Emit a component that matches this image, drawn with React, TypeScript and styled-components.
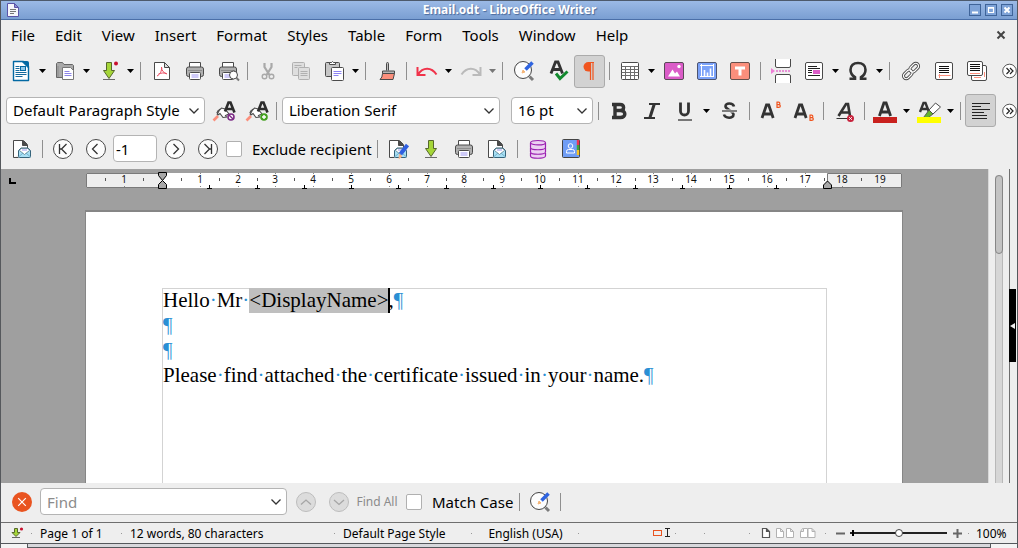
import React from "react";
import styled, { createGlobalStyle, css } from "styled-components";

const UI = `"Noto Sans", "Open Sans", sans-serif`;

const GlobalStyle = createGlobalStyle`
  *, *::before, *::after { box-sizing: border-box; }
  body { margin: 0; background: #eeeeee; font-family: ${UI}; color: #000; }
  button, input, select { font: inherit; color: inherit; margin: 0; }
`;

const Window = styled.div`
  display: flex;
  flex-direction: column;
  height: 100vh;
  overflow: hidden;
  background: #eeeeee;
  border: solid #55585c;
  border-width: 0 1px;
`;

/* ---------- title bar ---------- */

const TitleBar = styled.header`
  display: grid;
  grid-template-columns: 64px 1fr 64px;
  align-items: center;
  flex: none;
  height: 20px;
  padding: 0 4px 0 5px;
  border-top: 1px solid #4d5a6c;
  border-bottom: 1px solid #4a6fa8;
  background: linear-gradient(#9bbae6, #7a9fd2);
`;

const TitleText = styled.h1`
  margin: 0;
  text-align: center;
  font-size: 12px;
  line-height: 18px;
  font-weight: 700;
  color: #fff;
  text-shadow: 1px 1px 1px #4a6a9c;
`;

const WindowControls = styled.div`
  display: flex;
  justify-content: flex-end;
  gap: 4px;
`;

const WindowButton = styled.button`
  display: flex;
  width: 12px;
  height: 12px;
  padding: 0;
  border: 1px solid #3f6499;
  background: #7ea3d8;
`;

/* ---------- menus ---------- */

const MenuBar = styled.nav`
  display: flex;
  align-items: center;
  flex: none;
  height: 31px;
  padding-bottom: 2px;
`;

const MenuItem = styled.button`
  padding: 0 10px;
  border: 0;
  background: none;
  font-size: 15px;
  line-height: 24px;
`;

const CloseDocument = styled.button`
  display: flex;
  margin-left: auto;
  padding: 5px 11px;
  border: 0;
  background: none;
`;

/* ---------- toolbars ---------- */

const Toolbar = styled.div<{ $tall?: boolean; $last?: boolean }>`
  display: flex;
  align-items: center;
  flex: none;
  height: ${(p) => (p.$tall ? 40 : 39)}px;
  padding: ${(p) => (p.$last ? "0 0 2px 4px" : "0 0 0 3px")};
`;

const IconButton = styled.button<{ $active?: boolean }>`
  display: flex;
  align-items: center;
  justify-content: center;
  flex: none;
  width: 31px;
  height: 33px;
  margin: 0 1px;
  padding: 0;
  border: 1px solid transparent;
  border-radius: 3px;
  background: none;
  ${(p) =>
    p.$active &&
    css`
      border-color: #ababab;
      background: #d2d2d2;
    `}
`;

const ArrowButton = styled.button`
  display: flex;
  align-items: center;
  justify-content: center;
  flex: none;
  width: 11px;
  height: 33px;
  padding: 0;
  border: 0;
  background: none;
`;

const Separator = styled.span<{ $size?: number }>`
  display: flex;
  justify-content: center;
  flex: none;
  width: ${(p) => p.$size ?? 8}px;
  &::before {
    content: "";
    width: 1px;
    height: 18px;
    background: #8f8f8f;
  }
`;

const OverflowButton = styled.button`
  display: flex;
  flex: none;
  margin-left: auto;
  padding: 0;
  border: 0;
  background: none;
`;

const ComboBox = styled.span<{ $width: number }>`
  position: relative;
  flex: none;
  width: ${(p) => p.$width}px;
  margin: 0 2px;
  & + & {
    margin-left: 9px;
  }
  svg {
    position: absolute;
    top: 50%;
    right: 5px;
    margin-top: -6px;
    pointer-events: none;
  }
`;

const field = css`
  height: 27px;
  border: 1px solid #b4b4b4;
  border-radius: 4px;
  background: #fff;
  outline: 0;
  font-size: 15px;
`;

const Select = styled.select`
  ${field}
  display: block;
  width: 100%;
  padding: 0 22px 1px 6px;
  appearance: none;
`;

const RecipientInput = styled.input`
  ${field}
  flex: none;
  width: 44px;
  margin: 0 1px;
  padding: 0 2px;
`;

const FindInput = styled.input`
  ${field}
  display: block;
  width: 100%;
  padding: 0 22px 0 6px;
  &::placeholder {
    color: #8b8b8b;
    opacity: 1;
  }
`;

const CheckLabel = styled.label`
  display: flex;
  align-items: center;
  gap: 10px;
  flex: none;
  margin: 0 2px;
  font-size: 15px;
  line-height: 22px;
  white-space: nowrap;
`;

const CheckBox = styled.input`
  appearance: none;
  width: 16px;
  height: 16px;
  border: 1px solid #b0b0b0;
  border-radius: 2px;
  background: #fff;
`;

/* ---------- editing area ---------- */

const Workspace = styled.main`
  display: flex;
  flex: 1;
  min-height: 0;
`;

const Canvas = styled.section`
  position: relative;
  display: flex;
  flex-direction: column;
  align-items: center;
  flex: 1;
  min-width: 0;
  padding-right: 1px;
  overflow: hidden;
  background: #9f9f9f;
`;

const RulerRow = styled.div`
  flex: none;
  height: 41px;
  padding-top: 2px;
  svg {
    display: block;
  }
`;

const TabSelector = styled.button`
  position: absolute;
  top: 9px;
  left: 8px;
  width: 7px;
  height: 6px;
  padding: 0;
  border: solid #000;
  border-width: 0 0 2px 2px;
  background: none;
`;

const Page = styled.article`
  display: flex;
  flex: 1;
  width: 818px;
  padding: 76px 75px 0 76px;
  border: solid #868686;
  border-width: 2px 1px 0 1px;
  background: #fff;
`;

const TextFrame = styled.div`
  flex: 1;
  border: solid #d3d3d3;
  border-width: 0 1px;
  box-shadow: inset 0 1px 0 #d3d3d3;
  font-family: "Liberation Serif", serif;
  font-size: 21px;
  line-height: 25px;
  color: #000;
`;

const Paragraph = styled.p`
  margin: 0;
  white-space: nowrap;
`;

const Mark = styled.span`
  color: #2a8fd4;
`;

const Selected = styled.span`
  display: inline-block;
  background: #bfbfbf;
  box-shadow: 2px 0 0 #000;
`;

const ScrollColumn = styled.div`
  display: flex;
  justify-content: center;
  flex: none;
  width: 21px;
  padding-top: 6px;
  border-left: 1px solid #d8d8d8;
`;

const ScrollTrack = styled.div`
  width: 8px;
  border: solid #b8b8b8;
  border-width: 0 1px;
  border-radius: 4px 4px 0 0;
  background: #d6d6d6;
`;

const ScrollThumb = styled.div`
  height: 79px;
  margin: 0 -1px;
  border: 1px solid #868686;
  border-radius: 4px;
  background: #c3c3c3;
`;

const SidebarEdge = styled.div`
  flex: none;
  width: 8px;
  padding-top: 120px;
  border-left: 1px solid #6e6e6e;
`;

const SidebarHandle = styled.button`
  display: flex;
  align-items: center;
  width: 7px;
  height: 73px;
  margin-left: -1px;
  padding: 0;
  border: 0;
  background: #000;
`;

/* ---------- find bar and status bar ---------- */

const FindBar = styled.form`
  display: flex;
  align-items: center;
  flex: none;
  height: 39px;
  padding: 0 0 2px 4px;
`;

const FindAll = styled.button`
  flex: none;
  width: 44px;
  margin: 0 5px 0 0;
  padding: 0;
  border: 0;
  background: none;
  font-size: 12px;
  color: #8b8b8b;
  white-space: nowrap;
`;

const StatusBar = styled.footer`
  display: flex;
  align-items: center;
  flex: none;
  height: 22px;
  border-top: 1px solid #6e6e6e;
  border-bottom: 1px solid #55585c;
  font-size: 12px;
  white-space: nowrap;
`;

const StatusCell = styled.span<{ $width: number; $center?: boolean }>`
  display: flex;
  align-items: center;
  justify-content: ${(p) => (p.$center ? "center" : "flex-start")};
  flex: none;
  width: ${(p) => p.$width}px;
  height: 20px;
  padding-left: ${(p) => (p.$center ? 0 : 8)}px;
  background: linear-gradient(#999, #999) right center / 1px 1px no-repeat;
`;

const StatusSpring = styled.span`
  flex: 1;
`;

const ZoomControl = styled.span`
  display: flex;
  align-items: center;
  flex: none;
  width: 143px;
  padding: 0 7px 0 10px;
  background: linear-gradient(#999, #999) right center / 1px 1px no-repeat;
`;

const ZoomStep = styled.button`
  display: flex;
  padding: 0;
  border: 0;
  background: none;
`;

const ZoomSlider = styled.input`
  appearance: none;
  flex: 1;
  min-width: 0;
  height: 12px;
  margin: 0 6px 0 5px;
  background: linear-gradient(#000, #000) 2px center / 2px 6px no-repeat,
    linear-gradient(#222, #222) left center / 100% 2px no-repeat;
  &::-webkit-slider-thumb {
    appearance: none;
    width: 8px;
    height: 8px;
    border: 1px solid #444;
    border-radius: 50%;
    background: #fff;
  }
`;

const ZoomValue = styled.button`
  width: 48px;
  padding: 0 0 0 7px;
  border: 0;
  background: none;
  text-align: left;
`;

const WindowFrame = styled.div`
  flex: none;
  height: 4px;
  margin: 0 26px;
  border: solid #55585c;
  border-width: 0 1px 1px 1px;
  background: #d8d8dc;
  box-shadow: -26px 0 0 #f4f4f4, 26px 0 0 #f4f4f4;
`;

/* ---------- icons ---------- */

const G = "#4a4a4a";

const printer = (
  <>
    <path d="M6.5 8V3.5h11V8" fill="#fff" stroke={G} />
    <rect x="3.5" y="8" width="17" height="9.5" rx="2" fill="#b0b0b0" stroke={G} />
    <path d="M5 11.5h14" stroke="#8d8d8d" />
    <rect x="6.5" y="13.5" width="11" height="7" rx="1" fill="#fff" stroke={G} />
    <path d="M8.5 16h7M8.5 18h7" stroke="#9d95f0" />
  </>
);

const downArrow = (
  <>
    <path d="M9.5 3.5h5v8h3L12 19.5l-5.500-8h3z" fill="#a5d638" stroke="#56682c" />
    <path d="M6 20.500h12" stroke="#6a6a6a" />
  </>
);

const brush = (
  <>
    <path d="M1.500 21.500l4.500-4.500" stroke="#fb8f7c" strokeWidth="2.600" />
    <path d="M5 13.500l4.500-4.500 3.500 1 4 5-3.500 1.500 1 1.500-3.500.5-3-4-2 1.500z" fill="#fff" stroke={G} strokeWidth="1.100" />
    <path d="M5 16l2-4M8 10l-3 2.500" stroke={G} />
    <path d="M13 12.500l3.500-9h2l4 10M14.500 10h6" fill="none" stroke="#2c2c2c" strokeWidth="2.600" />
  </>
);

const mailPage = (
  <>
    <path d="M3.500 20.500v-17h10l4 4v6" fill="#fff" stroke={G} />
    <path d="M3.500 20.500h5" stroke={G} />
    <path d="M12.500 3.500v5h5z" fill={G} stroke={G} />
    <path d="M8.500 13.500l2.500-2.500h7l2.500 2.500v6q0 1-1 1h-10q-1 0-1-1z" fill="#a9e0f5" stroke="#36637a" />
    <path d="M9.500 13.500l1.500-2h7l1.500 2-5 4z" fill="#fff" stroke="#5b7c8c" strokeWidth=".8" />
    <path d="M12 13h5" stroke="#9d95f0" />
    <path d="M8.500 20l4.500-4M20.500 20l-4.500-4" stroke="#64a5c0" strokeWidth=".8" />
  </>
);

const sheetLines = <path d="M7 7.500h10M7 9.500h10M7 11.500h10M7 13.500h10" stroke="#111" />;

const bigA = <path d="M4 18L8.500 5h2.200l4.500 13M6 14h7.500" fill="none" stroke="#333" strokeWidth="2.800" />;

const navCircle = (d: string) => (
  <>
    <circle cx="12" cy="12" r="9.500" fill="#fcfcfc" stroke={G} />
    <path d={d} fill="none" stroke="#333" strokeWidth="1.300" />
  </>
);

const findReplace = (
  <>
    <circle cx="11" cy="11" r="8.500" fill="#fdfdfd" stroke="#444" />
    <path d="M17.500 17.500l3.500 3.500" stroke="#7b7b7b" strokeWidth="3" />
    <path d="M13.500 10.500L20.500 3.500" stroke="#2f64e0" strokeWidth="3.600" />
    <path d="M10 14l1-3 2 2z" fill="#f4b578" stroke="#f4b578" />
  </>
);

const ICONS: Record<string, React.ReactNode> = {
  newDoc: (
    <>
      <path d="M4.500 2.500h10l5 5v14h-15z" fill="#fff" stroke="#0369a3" strokeWidth="1.400" strokeLinejoin="round" />
      <path d="M13 2.500h5.500q1 0 1 1V9z" fill="#0369a3" stroke="#0369a3" />
      <path d="M6.500 7.500h4M6.500 9.500h4M6.500 11.500h4M6.500 13.500h11M6.500 15.500h11M6.500 17.500h7" stroke="#156a9c" />
      <rect x="11.500" y="7.500" width="5" height="4" fill="#8fc7e8" stroke="#0369a3" />
    </>
  ),
  open: (
    <>
      <path d="M3.500 6V4.500l1-1h5l1.500 2h8.500l1 1v12h-17z" fill="#a9a9a9" stroke="#666" />
      <path d="M5 18V7" stroke="#8c8c8c" />
      <path d="M9.500 8.500h8l3 3v9h-11z" fill="#fff" stroke="#777" />
      <path d="M11.500 12.500h5M11.500 14.500h7M11.500 16.500h7" stroke="#8c84e8" />
    </>
  ),
  save: (
    <>
      {downArrow}
      <circle cx="19" cy="4.500" r="2" fill="#c8102e" />
    </>
  ),
  pdf: (
    <>
      <path d="M4.500 3.500h10l5 5v12h-15z" fill="#fff" stroke={G} strokeLinejoin="round" />
      <path d="M14.500 3.500v5h5z" fill="#ddd" stroke={G} strokeLinejoin="round" />
      <path d="M7 17c3-1.500 5-5 4.500-9M11.500 8c0 4 2.500 6 5.500 7M8.500 15c2.500-1 5-1.500 8-.5" fill="none" stroke="#ea4b60" />
    </>
  ),
  print: printer,
  preview: (
    <>
      {printer}
      <circle cx="17.500" cy="16" r="4" fill="#fff" stroke={G} />
      <path d="M20.500 19l2.500 2.500" stroke="#777" strokeWidth="2" />
    </>
  ),
  cut: (
    <g fill="none" stroke="#a9a9a9">
      <path d="M8.500 4v4l5 8M15.500 4v4l-5 8" strokeWidth="2.200" />
      <circle cx="8.500" cy="17.500" r="2.300" strokeWidth="1.400" />
      <circle cx="15.500" cy="17.500" r="2.300" strokeWidth="1.400" />
    </g>
  ),
  copy: (
    <g fill="#dedede" stroke="#b0b0b0">
      <rect x="3.500" y="3.500" width="12" height="13" rx="1" />
      <path d="M5.500 6.500h7M5.500 8.500h3" />
      <rect x="9.500" y="8.500" width="11" height="12" rx="1" />
      <path d="M11.500 12.500h7M11.500 14.500h7M11.500 16.500h7" />
    </g>
  ),
  paste: (
    <>
      <rect x="3.500" y="3.500" width="14" height="14" rx="1" fill="#c6c6c6" stroke={G} />
      <path d="M7.500 5.500v-2h2l1-1 1 1h2v2z" fill="#fff" stroke={G} />
      <rect x="9.500" y="8.500" width="12" height="13" rx="1" fill="#fff" stroke={G} />
      <path d="M11.500 12.500h8M11.500 14.500h8M11.500 16.500h5" stroke="#8c84f4" />
    </>
  ),
  clone: (
    <>
      <path d="M11.500 11.500v-7q0-1 1-1t1 1v7" fill="#c0c0c0" stroke={G} />
      <path d="M7.500 14.500v-2.500h12v2.500z" fill="#b5b5b5" stroke={G} />
      <path d="M7.500 14.500h12l-1.500 6h-13q2.500-2 2.500-6z" fill="#fb8f7c" stroke={G} />
    </>
  ),
  undo: (
    <path d="M2.500 8v8h8M3 15.500c5-8 13.500-7.500 18.500 0" fill="none" stroke="#f0334a" strokeWidth="2" />
  ),
  redo: (
    <path d="M21.500 8v8h-8M21 15.500c-5-8-13.500-7.500-18.500 0" fill="none" stroke="#bababa" strokeWidth="2" />
  ),
  find: findReplace,
  spell: (
    <g transform="translate(3 -1)">
      <path d="M3 15.500L7.500 4h2.500l4.500 11.500M5 11.500h7.500" fill="none" stroke="#333" strokeWidth="2.800" />
      <path d="M8 15.500l4 5 7.500-7" fill="none" stroke="#12892e" strokeWidth="3" />
    </g>
  ),
  marks: (
    <>
      <path d="M12 3h-1.500a5 4.800 0 0 0 0 9.600H12z" fill="#f0551f" />
      <path d="M10 3.500h6M12.500 3v18M15 3v18" fill="none" stroke="#f0551f" strokeWidth="1.200" />
    </>
  ),
  table: (
    <>
      <rect x="3.500" y="3.500" width="17" height="17" rx="1" fill="#fff" stroke={G} />
      <path d="M3.500 7.500h17M3.500 10.500h17M3.500 13.500h17M3.500 16.500h17M7.500 7.500v13M12.500 7.500v13M16.500 7.500v13" stroke="#6d6d6d" />
    </>
  ),
  image: (
    <>
      <rect x="2.500" y="3.500" width="19" height="17" rx="1.500" fill="#db5cc8" stroke="#5b4a59" />
      <path d="M6 17.500l4.500-7 2.500 4 2-2 3 5z" fill="#fff" />
      <circle cx="17" cy="7.500" r="1.700" fill="#fff" />
    </>
  ),
  chart: (
    <>
      <rect x="2.500" y="3.500" width="19" height="17" rx="1.500" fill="#7ba2f9" stroke="#4d5470" />
      <path d="M5 6.500h14M6.500 5v13M5 17.500h13.500M18.500 5v13" stroke="#fff" />
      <path d="M9.500 11v6M12.500 13.500v3.500M15.500 9.500v7.500" stroke="#fff" strokeWidth="1.600" />
    </>
  ),
  textBox: (
    <>
      <rect x="2.500" y="3.500" width="19" height="17" rx="1.500" fill="#fb8f7c" stroke="#66504c" />
      <path d="M7 9h10M12 9v7.500" stroke="#fff" strokeWidth="3" />
    </>
  ),
  pageBreak: (
    <>
      <path d="M6.500 0v7q0 1.500 1.500 1.500h12q1.500 0 1.500-1.500V0M6.500 24v-7q0-1.500 1.500-1.500h12q1.500 0 1.500 1.500v7" fill="#fff" stroke={G} />
      <path d="M2 9l4 3-4 3z" fill="#ee7fd6" />
      <path d="M7 12h15" stroke="#e472cd" strokeWidth="1.400" strokeDasharray="2 1" />
    </>
  ),
  field: (
    <>
      <rect x="3.500" y="3.500" width="17" height="17" rx="1.500" fill="#fff" stroke={G} />
      <path d="M6 7.500h9M6 9.500h12M6 11.500h4M6 13.500h4M6 16.500h12" stroke="#222" />
      <rect x="11" y="11" width="7" height="4" fill="#db5cc8" />
    </>
  ),
  omega: (
    <path d="M3.500 19.700h5.500v-1.500C6 16.500 4.500 14 4.500 10.800 4.500 6.500 7.500 4 12 4s7.500 2.500 7.500 6.800c0 3.200-1.500 5.700-4.500 7.400v1.500h5.500" fill="none" stroke="#333" strokeWidth="2.600" />
  ),
  link: (
    <g fill="none" stroke={G}>
      <rect x="-5" y="-2.800" width="10" height="5.600" rx="2.800" strokeWidth="3" transform="translate(8.800 15.300) rotate(-45)" />
      <rect x="-5" y="-2.800" width="10" height="5.600" rx="2.800" strokeWidth="3" transform="translate(15.200 8.700) rotate(-45)" />
      <rect x="-5" y="-2.800" width="10" height="5.600" rx="2.800" stroke="#fff" strokeWidth="1.200" transform="translate(8.800 15.300) rotate(-45)" />
      <rect x="-5" y="-2.800" width="10" height="5.600" rx="2.800" stroke="#fff" strokeWidth="1.200" transform="translate(15.200 8.700) rotate(-45)" />
    </g>
  ),
  footnote: (
    <>
      <rect x="3.500" y="3.500" width="17" height="17" rx="1.500" fill="#fff" stroke={G} />
      {sheetLines}
      <path d="M7.500 15v4M6.500 16.500h12" stroke="#fb8f7c" />
    </>
  ),
  endnote: (
    <>
      <rect x="6.500" y="6.500" width="15" height="15" rx="1.500" fill="#fff" stroke={G} />
      <path d="M19.500 13v5M9 18.500h7" stroke="#fb8f7c" />
      <rect x="2.500" y="2.500" width="15" height="14" rx="1.500" fill="#fff" stroke={G} />
      <path d="M5 5.500h10M5 7.500h10M5 9.500h10M5 11.500h10" stroke="#111" />
      <path d="M5 14.500h10" stroke="#fb8f7c" />
    </>
  ),
  updateStyle: (
    <>
      {brush}
      <circle cx="19" cy="18" r="3" fill="#fff" stroke="#7c2c86" strokeWidth="1.600" />
      <path d="M17 16l4 4" stroke="#7c2c86" strokeWidth="1.400" />
    </>
  ),
  newStyle: (
    <>
      {brush}
      <circle cx="19" cy="18" r="3.800" fill="#43a01f" />
      <path d="M17 18h4M19 16v4" stroke="#fff" strokeWidth="1.400" />
    </>
  ),
  bold: (
    <path d="M8 5v14M5 5.500h8c4.800 0 4.800 6 0 6H8M13.500 11.500c5.800 0 5.800 7 0 7H5" fill="none" stroke="#333" strokeWidth="3.400" />
  ),
  italic: (
    <>
      <path d="M9 5h11M4 19h11" stroke="#333" strokeWidth="1.800" />
      <path d="M14.300 5l-4.500 14" stroke="#333" strokeWidth="3" />
    </>
  ),
  underline: (
    <>
      <path d="M7.500 3.500v8.500c0 5.300 8 5.300 8 0V3.500" fill="none" stroke="#333" strokeWidth="2.800" />
      <path d="M5 21h14" stroke="#444" strokeWidth="1.400" />
    </>
  ),
  strike: (
    <>
      <path d="M17 7.500C16 3.500 8 3.500 8.500 7.500c.3 3 8 4.500 8 8 0 4.500-8.500 4-9.500 0" fill="none" stroke="#333" strokeWidth="2.600" />
      <path d="M5 12h15" stroke="#eee" strokeWidth="3" />
      <path d="M5 12h15" stroke="#333" strokeWidth="1.200" />
    </>
  ),
  superscript: (
    <>
      <g transform="translate(0 1)">{bigA}</g>
      <path d="M19 3v5.500M18.500 3.200h2.200c1.500 0 1.500 2.500 0 2.500H19M20.700 5.700c2.200 0 2.200 2.600 0 2.600h-2.200" fill="none" stroke="#f0551f" strokeWidth="1.200" />
    </>
  ),
  subscript: (
    <>
      <g transform="translate(0 1)">{bigA}</g>
      <path d="M19 16v5.500M18.500 16.200h2.200c1.500 0 1.500 2.500 0 2.500H19M20.700 18.700c2.200 0 2.200 2.600 0 2.600h-2.200" fill="none" stroke="#f0551f" strokeWidth="1.200" />
    </>
  ),
  clearFormat: (
    <>
      <path d="M6.500 17L14 5h2l2 12M9.500 13.500h7" fill="none" stroke="#333" strokeWidth="2.600" />
      <path d="M4.500 19.500h12" stroke="#333" />
      <circle cx="18.500" cy="19.500" r="3.500" fill="#c8223c" />
      <path d="M17.200 18.200l2.600 2.600M19.800 18.200l-2.600 2.600" stroke="#fff" />
    </>
  ),
  fontColor: (
    <>
      <g transform="translate(2.400 -1)">{bigA}</g>
      <path d="M0 21h24" stroke="#c9211e" strokeWidth="6" />
    </>
  ),
  highlight: (
    <>
      <path d="M3 13L6.500 4h2L12 13M4.500 10h6" fill="none" stroke="#333" strokeWidth="2.400" />
      <path d="M12 11l6.500-7 5 4-7.500 7z" fill="#fff" stroke={G} />
      <path d="M12 11l4 4-4.500 3.500H6.500z" fill="#63b32e" stroke={G} strokeWidth=".8" />
      <path d="M0 21h24" stroke="#ffff00" strokeWidth="6" />
    </>
  ),
  alignLeft: (
    <path d="M3 4.500h18M3 7.500h9M3 10.500h18M3 13.500h12M3 16.500h15M3 19.500h15" stroke="#222" />
  ),
  mail: mailPage,
  first: navCircle("M8.500 7v10M15.500 7l-5 5 5 5M8.500 12h2"),
  prev: navCircle("M13.500 7l-5 5 5 5"),
  next: navCircle("M10.500 7l5 5-5 5"),
  last: navCircle("M15.500 7v10M8.500 7l5 5-5 5M13.500 12h2"),
  mailEdit: (
    <>
      {mailPage}
      <path d="M14.500 17L21.500 8" stroke="#2f5fe0" strokeWidth="4" />
      <path d="M13 21.500l.5-4 2.500 1.800z" fill="#f9b48a" stroke="#f9b48a" />
    </>
  ),
  saveMerged: downArrow,
  database: (
    <g fill="#ecd0f2" stroke="#9a1fb0" strokeWidth="1.200">
      <path d="M4.500 16v3c0 3 15 3 15 0v-3" />
      <path d="M4.500 11v4c0 3 15 3 15 0v-4" />
      <path d="M4.500 6v4.500c0 3 15 3 15 0V6" />
      <ellipse cx="12" cy="5.700" rx="7.500" ry="2.200" />
    </g>
  ),
  contacts: (
    <>
      <rect x="3.500" y="2.500" width="17" height="18" rx="1" fill="#6f9df5" stroke="#444" />
      <path d="M19 3v5" stroke="#ee3355" strokeWidth="2.400" />
      <path d="M19 8v5" stroke="#3fa535" strokeWidth="2.400" />
      <path d="M19 13v5" stroke="#f7c325" strokeWidth="2.400" />
      <circle cx="11.500" cy="9" r="2.300" fill="none" stroke="#fff" />
      <path d="M7.500 16v-1.500q0-2 2-2h4q2 0 2 2V16z" fill="none" stroke="#fff" />
    </>
  ),
  closeFind: (
    <>
      <circle cx="12" cy="12" r="10" fill="#e95420" />
      <path d="M8.200 8.200l7.600 7.600M15.800 8.200l-7.600 7.600" stroke="#fff" strokeWidth="1.200" />
    </>
  ),
  findUp: (
    <>
      <circle cx="12" cy="12" r="9.500" fill="#dcdcdc" stroke="#bdbdbd" />
      <path d="M7 14.500l5-4.500 5 4.500" fill="none" stroke="#a6a6a6" strokeWidth="1.300" />
    </>
  ),
  findDown: (
    <>
      <circle cx="12" cy="12" r="9.500" fill="#dcdcdc" stroke="#bdbdbd" />
      <path d="M7 10l5 4.500 5-4.500" fill="none" stroke="#a6a6a6" strokeWidth="1.300" />
    </>
  ),
};

const Icon = ({ name }: { name: string }) => (
  <svg width="24" height="24" viewBox="0 0 24 24" fill="none" aria-hidden="true">
    {ICONS[name]}
  </svg>
);

const Chevron = () => (
  <svg width="12" height="12" viewBox="0 0 12 12" fill="none" aria-hidden="true">
    <path d="M1.500 3.500L6 8l4.500-4.500" stroke="#333" strokeWidth="1.300" />
  </svg>
);

const Tool = ({ name, label, active }: { name: string; label: string; active?: boolean }) => (
  <IconButton type="button" aria-label={label} aria-pressed={active} $active={active}>
    <Icon name={name} />
  </IconButton>
);

const Arrow = ({ label, faded }: { label: string; faded?: boolean }) => (
  <ArrowButton type="button" aria-label={label}>
    <svg width="7" height="4" viewBox="0 0 7 4" aria-hidden="true">
      <path d="M0 0h7L3.500 4z" fill={faded ? "#777" : "#000"} />
    </svg>
  </ArrowButton>
);

const More = ({ label }: { label: string }) => (
  <OverflowButton type="button" aria-label={label}>
    <svg width="15" height="16" viewBox="0 0 15 16" fill="none" aria-hidden="true">
      <circle cx="7.500" cy="8" r="6.800" fill="#fff" stroke="#555" />
      <path d="M4.500 5l3 3-3 3M8 5l3 3-3 3" stroke="#222" strokeWidth="1.200" />
    </svg>
  </OverflowButton>
);

/* ---------- ruler ---------- */

const CM = 37.8;
const RULER_ZERO = 77;

const Ruler = () => {
  const numbers = [-1, ...Array.from({ length: 19 }, (_, i) => i + 1)];
  const halves = Array.from({ length: 21 }, (_, i) => i - 1.5);
  const tabs = Array.from({ length: 13 }, (_, i) => (i + 1) * 1.25);
  const at = (cm: number) => Math.round(RULER_ZERO + cm * CM);
  return (
    <svg width="818" height="20" viewBox="0 0 818 20" role="img" aria-label="Ruler">
      <rect x="1" y="2" width="816" height="15" fill="#fff" />
      <path d="M77 2.500H1.500v14H77M742.500 16.500H816.500v-14H742.500z" fill="#eeeeee" stroke="#7a7a7a" />
      {halves.map((h) => (
        <path key={h} d={`M${at(h)}.5 7v3`} stroke="#555" />
      ))}
      {numbers.map((n) => (
        <React.Fragment key={n}>
          <path d={`M${at(n)}.5 2v1M${at(n)}.5 15v1`} stroke="#888" />
          <text x={at(n)} y="12" textAnchor="middle" fontFamily="Noto Sans, sans-serif" fontSize="10" fill="#111">
            {Math.abs(n)}
          </text>
        </React.Fragment>
      ))}
      {tabs.map((t) => (
        <path key={t} d={`M${at(t)}.5 14v3M${at(t) - 2} 17.500h5`} stroke="#000" />
      ))}
      <path d="M73.500 1.500h8v3l-4 5 4 4v4h-8v-4l4-4-4-5z" fill="#a8a8a8" stroke="#000" />
      <path d="M738.500 17.500v-3.500l4-4 4 4v3.500z" fill="#a8a8a8" stroke="#000" />
    </svg>
  );
};

const Pilcrow = () => <Mark>¶</Mark>;

const Words = ({ text }: { text: string }) => (
  <>
    {text.split(" ").map((word, i) => (
      <React.Fragment key={i}>
        {i > 0 && <Mark>·</Mark>}
        {word}
      </React.Fragment>
    ))}
  </>
);

const MENUS = ["File", "Edit", "View", "Insert", "Format", "Styles", "Table", "Form", "Tools", "Window", "Help"];

export default function App() {
  return (
    <Window>
      <GlobalStyle />
      <TitleBar>
        <svg width="14" height="14" viewBox="0 0 14 14" fill="none" aria-hidden="true">
          <path d="M1.500.5h7l4 4v9h-11z" fill="#f6f6fb" stroke="#5a55a8" />
          <path d="M8.500.5v4h4z" fill="#8f8bd0" stroke="#5a55a8" />
          <path d="M4 6.500h6M4 8.500h6M4 10.500h4" stroke="#777" />
        </svg>
        <TitleText>Email.odt - LibreOffice Writer</TitleText>
        <WindowControls>
          <WindowButton aria-label="Minimize">
            <svg width="10" height="10" viewBox="0 0 10 10">
              <path d="M2 7.500h6" stroke="#fff" strokeWidth="2" />
            </svg>
          </WindowButton>
          <WindowButton aria-label="Maximize">
            <svg width="10" height="10" viewBox="0 0 10 10">
              <path d="M2.500 2.500h5v5h-5zM2 3.200h6" fill="none" stroke="#fff" strokeWidth="1.200" />
            </svg>
          </WindowButton>
          <WindowButton aria-label="Close">
            <svg width="10" height="10" viewBox="0 0 10 10">
              <path d="M2.500 2.500l5 5M7.500 2.500l-5 5" stroke="#fff" strokeWidth="2" />
            </svg>
          </WindowButton>
        </WindowControls>
      </TitleBar>

      <MenuBar>
        {MENUS.map((m) => (
          <MenuItem key={m} type="button">
            {m}
          </MenuItem>
        ))}
        <CloseDocument type="button" aria-label="Close document">
          <svg width="10" height="10" viewBox="0 0 10 10">
            <path d="M1.500 1.500l7 7M8.500 1.500l-7 7" stroke="#444" strokeWidth="2" />
          </svg>
        </CloseDocument>
      </MenuBar>

      <Toolbar $tall>
        <Tool name="newDoc" label="New" />
        <Arrow label="New options" />
        <Tool name="open" label="Open" />
        <Arrow label="Open options" />
        <Tool name="save" label="Save" />
        <Arrow label="Save options" />
        <Separator $size={9} />
        <Tool name="pdf" label="Export as PDF" />
        <Tool name="print" label="Print" />
        <Tool name="preview" label="Print preview" />
        <Separator $size={7} />
        <Tool name="cut" label="Cut" />
        <Tool name="copy" label="Copy" />
        <Tool name="paste" label="Paste" />
        <Arrow label="Paste options" />
        <Separator $size={9} />
        <Tool name="clone" label="Clone formatting" />
        <Separator $size={7} />
        <Tool name="undo" label="Undo" />
        <Arrow label="Undo options" />
        <Tool name="redo" label="Redo" />
        <Arrow label="Redo options" faded />
        <Separator $size={9} />
        <Tool name="find" label="Find and replace" />
        <Tool name="spell" label="Spelling" />
        <Tool name="marks" label="Formatting marks" active />
        <Separator $size={7} />
        <Tool name="table" label="Insert table" />
        <Arrow label="Table options" />
        <Tool name="image" label="Insert image" />
        <Tool name="chart" label="Insert chart" />
        <Tool name="textBox" label="Insert text box" />
        <Separator />
        <Tool name="pageBreak" label="Insert page break" />
        <Tool name="field" label="Insert field" />
        <Arrow label="Field options" />
        <Tool name="omega" label="Special character" />
        <Arrow label="Special character options" />
        <Separator $size={9} />
        <Tool name="link" label="Insert hyperlink" />
        <Tool name="footnote" label="Insert footnote" />
        <Tool name="endnote" label="Insert endnote" />
        <More label="More standard tools" />
      </Toolbar>

      <Toolbar>
        <ComboBox $width={199}>
          <Select aria-label="Paragraph style">
            <option>Default Paragraph Style</option>
          </Select>
          <Chevron />
        </ComboBox>
        <Tool name="updateStyle" label="Update style" />
        <Tool name="newStyle" label="New style" />
        <Separator $size={7} />
        <ComboBox $width={218}>
          <Select aria-label="Font name">
            <option>Liberation Serif</option>
          </Select>
          <Chevron />
        </ComboBox>
        <ComboBox $width={82}>
          <Select aria-label="Font size">
            <option>16 pt</option>
          </Select>
          <Chevron />
        </ComboBox>
        <Separator $size={7} />
        <Tool name="bold" label="Bold" />
        <Tool name="italic" label="Italic" />
        <Tool name="underline" label="Underline" />
        <Arrow label="Underline options" />
        <Tool name="strike" label="Strikethrough" />
        <Separator />
        <Tool name="superscript" label="Superscript" />
        <Tool name="subscript" label="Subscript" />
        <Separator />
        <Tool name="clearFormat" label="Clear formatting" />
        <Separator />
        <Tool name="fontColor" label="Font color" />
        <Arrow label="Font color options" />
        <Tool name="highlight" label="Highlighting" />
        <Arrow label="Highlighting options" />
        <Separator />
        <Tool name="alignLeft" label="Align left" active />
        <More label="More formatting tools" />
      </Toolbar>

      <Toolbar $last>
        <Tool name="mail" label="Mail merge" />
        <Separator />
        <Tool name="first" label="First record" />
        <Tool name="prev" label="Previous record" />
        <RecipientInput aria-label="Current record" defaultValue="-1" />
        <Tool name="next" label="Next record" />
        <Tool name="last" label="Last record" />
        <CheckLabel>
          <CheckBox type="checkbox" />
          Exclude recipient
        </CheckLabel>
        <Separator />
        <Tool name="mailEdit" label="Edit individual documents" />
        <Tool name="saveMerged" label="Save merged documents" />
        <Tool name="print" label="Print merged documents" />
        <Tool name="mail" label="Email merged documents" />
        <Separator />
        <Tool name="database" label="Data sources" />
        <Tool name="contacts" label="Address book" />
      </Toolbar>

      <Workspace>
        <Canvas>
          <TabSelector type="button" aria-label="Tab alignment" />
          <RulerRow>
            <Ruler />
          </RulerRow>
          <Page>
            <TextFrame>
              <Paragraph>
                <Words text="Hello Mr " />
                <Selected>&lt;DisplayName&gt;</Selected>,<Pilcrow />
              </Paragraph>
              <Paragraph>
                <Pilcrow />
              </Paragraph>
              <Paragraph>
                <Pilcrow />
              </Paragraph>
              <Paragraph>
                <Words text="Please find attached the certificate issued in your name." />
                <Pilcrow />
              </Paragraph>
            </TextFrame>
          </Page>
        </Canvas>
        <ScrollColumn>
          <ScrollTrack>
            <ScrollThumb />
          </ScrollTrack>
        </ScrollColumn>
        <SidebarEdge>
          <SidebarHandle type="button" aria-label="Show sidebar">
            <svg width="7" height="8" viewBox="0 0 7 8">
              <path d="M6 1v6L1 4z" fill="#eee" />
            </svg>
          </SidebarHandle>
        </SidebarEdge>
      </Workspace>

      <FindBar>
        <Tool name="closeFind" label="Close find bar" />
        <ComboBox $width={247}>
          <FindInput aria-label="Find" placeholder="Find" />
          <Chevron />
        </ComboBox>
        <Tool name="findUp" label="Find previous" />
        <Tool name="findDown" label="Find next" />
        <FindAll type="button">Find All</FindAll>
        <CheckLabel>
          <CheckBox type="checkbox" />
          Match Case
        </CheckLabel>
        <Separator />
        <Tool name="find" label="Find and replace" />
        <Separator />
      </FindBar>

      <StatusBar>
        <StatusCell $width={31} $center>
          <svg width="14" height="12" viewBox="0 0 14 12" fill="none" aria-hidden="true">
            <path d="M4.500 1.500h3v4h2.500L6 9.500 2 5.500h2.500z" fill="#a5d638" stroke="#56682c" />
            <path d="M2 10.500h8" stroke="#666" />
            <circle cx="11.500" cy="2" r="1.600" fill="#c8102e" />
          </svg>
        </StatusCell>
        <StatusCell $width={90}>Page 1 of 1</StatusCell>
        <StatusCell $width={213}>12 words, 80 characters</StatusCell>
        <StatusCell $width={137}>Default Page Style</StatusCell>
        <StatusCell $width={107} $center>
          English (USA)
        </StatusCell>
        <StatusSpring />
        <StatusCell $width={29} $center>
          <svg width="18" height="10" viewBox="0 0 18 10" fill="none" aria-hidden="true">
            <rect x=".5" y="2.500" width="8" height="5" stroke="#e95420" />
            <path d="M12 .5h5M12 8.500h5M14.500 1v8" stroke="#222" />
          </svg>
        </StatusCell>
        <StatusCell $width={29} />
        <StatusCell $width={45} />
        <StatusCell $width={76} $center>
          <svg width="56" height="12" viewBox="0 0 56 12" fill="none" aria-hidden="true">
            <path d="M2.500 1.500h4l3 3v6h-7zM6.500 1.500v3h3" fill="#fff" stroke="#555" strokeWidth="1.200" />
            <path d="M16.500 1.500h4l3 3v6h-7zM20.500 1.500v3h3M26.500 1.500h4l3 3v6h-7zM30.500 1.500v3h3M43.500 1.500h-1l-2 3v6h7v-9zM43.500 1.500v3h-3M48 1.500h4l3 3v6h-7zM52 1.500v3h3" fill="#fff" stroke="#b2b2b2" />
          </svg>
        </StatusCell>
        <ZoomControl>
          <ZoomStep type="button" aria-label="Zoom out">
            <svg width="9" height="9" viewBox="0 0 9 9">
              <path d="M0 4.500h9" stroke="#666" strokeWidth="2" />
            </svg>
          </ZoomStep>
          <ZoomSlider type="range" aria-label="Zoom" min={0} max={100} defaultValue={50} />
          <ZoomStep type="button" aria-label="Zoom in">
            <svg width="9" height="9" viewBox="0 0 9 9">
              <path d="M0 4.500h9M4.500 0v9" stroke="#666" strokeWidth="2" />
            </svg>
          </ZoomStep>
        </ZoomControl>
        <ZoomValue type="button">100%</ZoomValue>
      </StatusBar>
      <WindowFrame />
    </Window>
  );
}
